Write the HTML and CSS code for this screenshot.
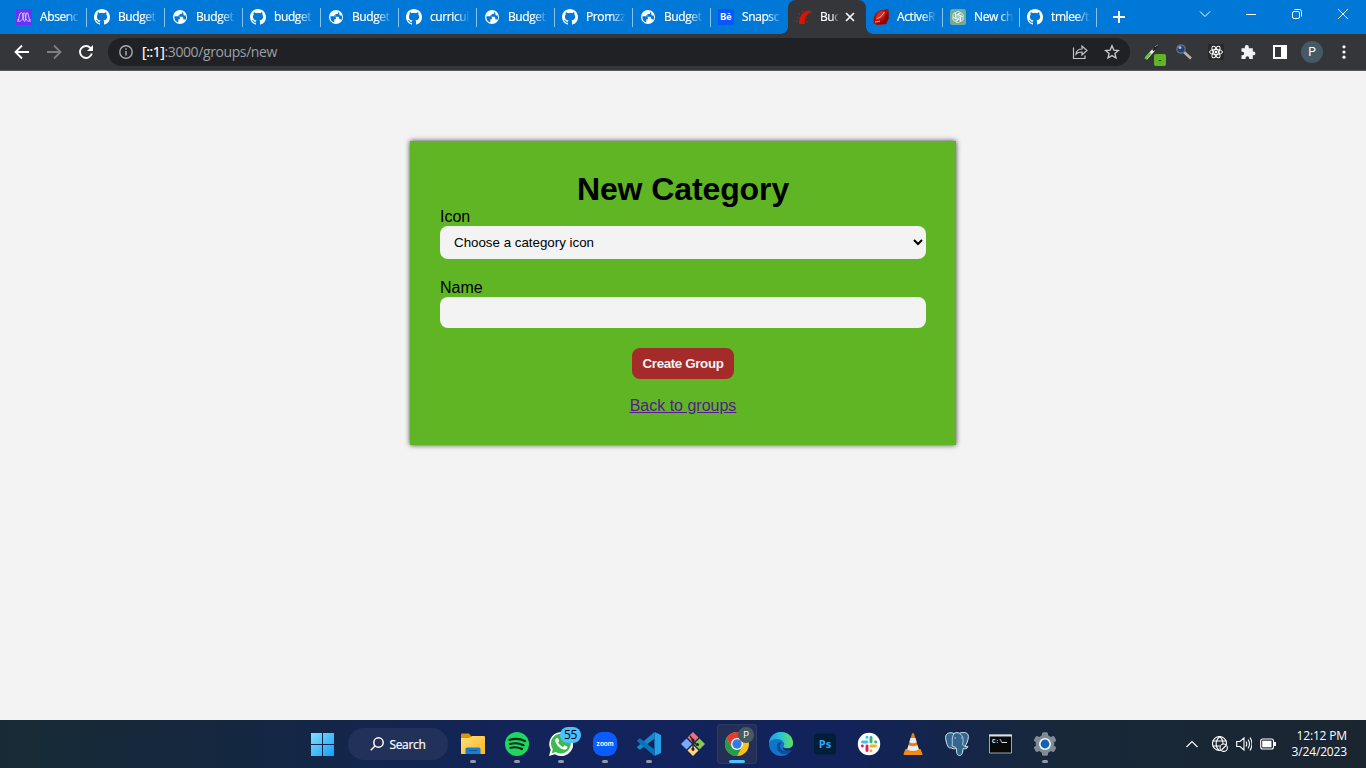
FILE: index.html
```html
<!DOCTYPE html>
<html lang="en">
<head>
<meta charset="utf-8">
<title>Budget</title>
<link rel="stylesheet" href="styles.css">
</head>
<body>
<svg class="defs" aria-hidden="true">
  <symbol id="github" viewBox="0 0 16 16"><path fill="#fff" d="M8 0C3.58 0 0 3.58 0 8c0 3.54 2.29 6.53 5.47 7.59.4.07.55-.17.55-.38 0-.19-.01-.82-.01-1.49-2.01.37-2.53-.49-2.69-.94-.09-.23-.48-.94-.82-1.13-.28-.15-.68-.52-.01-.53.63-.01 1.08.58 1.23.82.72 1.21 1.87.87 2.33.66.07-.52.28-.87.51-1.07-1.78-.2-3.64-.89-3.64-3.95 0-.87.31-1.59.82-2.15-.08-.2-.36-1.02.08-2.12 0 0 .67-.21 2.2.82a7.6 7.6 0 0 1 4 0c1.53-1.04 2.2-.82 2.2-.82.44 1.1.16 1.92.08 2.12.51.56.82 1.27.82 2.15 0 3.07-1.87 3.75-3.65 3.95.29.25.54.73.54 1.48 0 1.07-.01 1.93-.01 2.2 0 .21.15.46.55.38A8 8 0 0 0 16 8c0-4.42-3.58-8-8-8z"/></symbol>
  <symbol id="globe" viewBox="0 0 16 16"><circle cx="8" cy="8" r="7" fill="#fff"/><path fill="#0078d7" d="M2.400 7.300h3.100q2.500 0 2.500 2v1H6.300v3.300A5.900 5.900 0 0 1 2.400 7.300zM8.800 2.300h1.400v1.400q0 1.200-1.200 1.200H7.500v1.600H6v1.200h4q1.200 0 1.200 1.200v1.400h1q1 0 1.100.9a5.800 5.800 0 0 0 .5-4.700h-1.200q-1.200 0-1.200-1V4.300L9.500 2.200z"/></symbol>
</svg>
<div class="browser">
  <header class="tabs">
    <div class="tab"><svg class="fav" viewBox="0 0 16 16"><path fill="#6b32f5" d="M0 0h16v16H0z"/><path d="M1.500 13C3 12 3 3.500 5.300 3.500S7 12.500 8.500 12.500 9.500 3.500 11 3.500 13 12 14.500 13M1.500 10.500C2.500 14 7 12 7 7 7 2.500 9.300 2.500 9.300 7S13 14 14.500 10.500" fill="none" stroke="#ddceff"/></svg><span class="title">Absenc</span></div>
    <div class="tab"><svg class="fav"><use href="#github"/></svg><span class="title">Budget</span></div>
    <div class="tab"><svg class="fav"><use href="#globe"/></svg><span class="title">Budget</span></div>
    <div class="tab"><svg class="fav"><use href="#github"/></svg><span class="title">budget</span></div>
    <div class="tab"><svg class="fav"><use href="#globe"/></svg><span class="title">Budget</span></div>
    <div class="tab"><svg class="fav"><use href="#github"/></svg><span class="title">curricul</span></div>
    <div class="tab"><svg class="fav"><use href="#globe"/></svg><span class="title">Budget</span></div>
    <div class="tab"><svg class="fav"><use href="#github"/></svg><span class="title">Promzz</span></div>
    <div class="tab"><svg class="fav"><use href="#globe"/></svg><span class="title">Budget</span></div>
    <div class="tab last"><span class="fav behance">Bē</span><span class="title">Snapsc</span></div>
    <div class="tab active"><svg class="fav" viewBox="0 0 16 16"><path fill="#d81505" d="M3 15C3 9 6 3 11 1.800c2-.4 3.800.2 4.500.7l-.8 1.200C11.500 4 7.800 9 9 15zM.5 11.500l1 .4-.1 1.300-1.200-.3zM1.500 7.800l1 .7-.5 1-1-.6zM3.500 4.300l.8.900-.7.800-.8-.8zM6.700 1.600l.4 1-.8.600-.5-1zM10.500 12l1.300.4.400 1.300-1.300-.4zM10.100 9l1 .4.100 1-1-.4z"/></svg><span class="title">Buc</span><svg class="x" viewBox="0 0 10 10"><path d="m1 1 8 8M9 1 1 9" stroke="#fff" stroke-width="1.700"/></svg></div>
    <div class="tab narrow first"><svg class="fav" viewBox="0 0 16 16"><path fill="#b30d04" d="M.5 9Q2 3 9 1L15.500 0v9.500L13 15l-9 1-3.500-2z"/><path fill="#d62c20" d="M3 8Q4 3 9 2c4-.2 4 3 1 6s-7 4-7 0z"/><path fill="#840602" d="M15.500 2v7.500L13 15l-9 .5 7-4z"/><path d="M3.500 10Q9 8 11.500 3M2 13q4-.5 5-1" fill="none" stroke="#f3aa9c"/></svg><span class="title">ActiveR</span></div>
    <div class="tab narrow"><svg class="fav" viewBox="0 0 16 16"><rect width="16" height="16" rx="2.500" fill="#74aa9c"/><g fill="none" stroke="#fff" stroke-width=".7"><path id="petal" d="M5.600 9.400V4.700a2.500 2.500 0 0 1 4.500-1.300M7.300 7.600V5.300l3.500-2"/><use href="#petal" transform="rotate(60 8 8)"/><use href="#petal" transform="rotate(120 8 8)"/><use href="#petal" transform="rotate(180 8 8)"/><use href="#petal" transform="rotate(240 8 8)"/><use href="#petal" transform="rotate(300 8 8)"/></g></svg><span class="title">New ch</span></div>
    <div class="tab narrow"><svg class="fav"><use href="#github"/></svg><span class="title">tmlee/t</span></div>
    <svg class="plus" viewBox="0 0 12 12"><path d="M6 0v12M0 6h12" stroke="#fff" stroke-width="2"/></svg>
    <div class="window">
      <svg viewBox="0 0 12 12"><path d="m1 3.500 5 5 5-5"/></svg>
      <svg viewBox="0 0 12 12"><path d="M1 6.500h10"/></svg>
      <svg viewBox="0 0 12 12"><rect x="1.500" y="3.500" width="7" height="7" rx="1.500"/><path d="M3.500 1.500h5q2 0 2 2v5"/></svg>
      <svg viewBox="0 0 12 12"><path d="m1 1 10 10M11 1 1 11"/></svg>
    </div>
  </header>
  <nav class="toolbar">
    <svg class="nav-icon" viewBox="0 0 16 16"><path d="M15 8H2M8 1.500 1.500 8 8 14.500" fill="none" stroke="#fff" stroke-width="1.800"/></svg>
    <svg class="nav-icon" viewBox="0 0 16 16"><path d="M1 8h13M8 1.500 14.500 8 8 14.500" fill="none" stroke="#7e7f82" stroke-width="1.800"/></svg>
    <svg class="nav-icon" viewBox="0 0 16 16"><path d="M13.800 9.500A6 6 0 1 1 12.200 3.700L14 5.500" fill="none" stroke="#fff" stroke-width="1.900"/><path d="M15 1v6H9z" fill="#fff"/></svg>
    <div class="address">
      <svg class="info" viewBox="0 0 14 14"><circle cx="7" cy="7" r="6.200" fill="none" stroke="#aaabad" stroke-width="1.400"/><path d="M7 6v4.500M7 3.300v1.500" stroke="#aaabad" stroke-width="1.500"/></svg>
      <span class="url"><b>[::1]</b>:3000/groups/new</span>
      <svg class="share" viewBox="0 0 16 16" fill="none" stroke="#c5c6c8" stroke-width="1.200"><path d="M1.500 3.500v11h11.500v-3M4 10c.5-4 3-5 6-5V2l5 4.500L10 11V8C7.500 8 5.500 8.300 4 10z"/></svg>
      <svg class="star" viewBox="0 0 16 16"><path d="m8 1.800 1.800 4.300 4.600.4-3.500 3 1.100 4.500L8 11.600 4 14l1.100-4.500-3.500-3 4.600-.4z" fill="none" stroke="#c8cacd" stroke-width="1.300"/></svg>
    </div>
    <div class="extensions">
      <span class="ext picker"><svg viewBox="0 0 16 16"><path d="m2 14.500 8-9" stroke="#eee" stroke-width="3"/><path d="m1.500 15 5-6" stroke="#67c23a" stroke-width="2.600"/><path d="m9 6.500 5-5.500" stroke="#222628" stroke-width="2.500"/><path d="m11 2.800 3-2" stroke="#888"/></svg><i class="badge">-</i></span>
      <svg class="ext" viewBox="0 0 16 16"><path d="m8 8 7 6.500" stroke="#b9b3ad" stroke-width="2.500"/><circle cx="5" cy="5" r="4.200" fill="#263f70" stroke="#65738d" stroke-width="1.200"/><circle cx="4" cy="3.600" r="1.500" fill="#9fbde9"/></svg>
      <svg class="ext" viewBox="0 0 16 16"><path fill="#28292b" d="M0 0h16v16H0z"/><g fill="none" stroke="#fff" stroke-width="1"><ellipse cx="8" cy="8" rx="6.500" ry="2.500"/><ellipse cx="8" cy="8" rx="6.500" ry="2.500" transform="rotate(60 8 8)"/><ellipse cx="8" cy="8" rx="6.500" ry="2.500" transform="rotate(120 8 8)"/></g><circle cx="8" cy="8" r="1.300" fill="#fff"/></svg>
      <svg class="ext" viewBox="0 0 16 16"><path fill="#f1f3f4" d="M1.500 4.200h3.300V3a2 2 0 0 1 4 0v1.200h4V7.500h.7a1.900 1.900 0 0 1 0 3.800h-.7V15H9.200v-1a1.800 1.800 0 0 0-3.600 0v1H1.500v-3.700h.9a1.800 1.800 0 0 0 0-3.600h-.9z"/></svg>
      <svg class="ext" viewBox="0 0 16 16"><path fill="#fff" fill-rule="evenodd" d="M1 1h14v14H1zm2 2v10h6V3z"/></svg>
      <span class="avatar">P</span>
      <svg class="dots" viewBox="0 0 4 16"><g fill="#fff"><circle cx="2" cy="2.800" r="1.600"/><circle cx="2" cy="8" r="1.600"/><circle cx="2" cy="13.200" r="1.600"/></g></svg>
    </div>
  </nav>
</div>
<main class="page">
  <form class="card">
    <h1>New Category</h1>
    <label for="icon">Icon</label>
    <select id="icon"><option>Choose a category icon</option></select>
    <label for="name">Name</label>
    <input id="name" type="text">
    <button type="button">Create Group</button>
    <a href="#groups">Back to groups</a>
  </form>
</main>
<footer class="taskbar">
  <div class="apps">
    <div class="app"><svg viewBox="0 0 24 24"><defs><linearGradient id="win" x2="1" y2="1"><stop stop-color="#80e0fc"/><stop offset="1" stop-color="#149dff"/></linearGradient></defs><path fill="url(#win)" d="M1 1h11v11H1zm12 0h11v11H13zM1 13h11v11H1zm12 0h11v11H13z"/></svg></div>
    <div class="search"><svg viewBox="0 0 14 14"><circle cx="8.500" cy="5.500" r="4.700"/><path d="M5.200 8.800.8 13.200"/></svg>Search</div>
    <div class="app run"><svg viewBox="0 0 24 24"><defs><linearGradient id="fold" x2="1" y2="1"><stop stop-color="#ffe17a"/><stop offset="1" stop-color="#ffb51f"/></linearGradient></defs><path fill="#dc9700" d="M0 2.500q0-1 1-1h7l2 2.500v5H0z"/><path fill="url(#fold)" d="M0 6h8l3-2h12q1 0 1 1v17H0z"/><path fill="#1680d0" d="M4.500 22v-5q0-1.500 1.500-1.500h12q1.500 0 1.500 1.500v5z"/><path d="M8 18.500h8" stroke="#0c5ba4"/></svg></div>
    <div class="app run"><svg viewBox="0 0 24 24"><circle cx="12" cy="12" r="12" fill="#1ed760"/><path d="M4.500 7.900Q13 5.400 20 9.100M5 12q7.500-2 13.500 1.200M5.500 15.800q6.500-1.500 11.500 1.200" fill="none" stroke="#102a19" stroke-width="2.200" stroke-linecap="round"/></svg></div>
    <div class="app run"><svg viewBox="0 0 24 24"><path fill="#fff" d="m0 24 1.700-6.200A12 12 0 1 1 6 22.300z"/><path fill="#3dba4d" d="m2.700 21.200 1.100-3.900A9.900 9.900 0 1 1 6.700 20z"/><path fill="#fff" d="M7.200 6.300c-1 .9-1.300 2.300-.6 3.900 1.500 3.700 4.600 6.500 8.200 7.400 1.800.4 3.800-.9 3.700-2.900l-3-1.500-1.500 1.800c-2.300-.9-3.900-2.400-4.900-4.400l1.200-1.500-1.400-3z"/></svg><i class="count">55</i></div>
    <div class="app run"><svg viewBox="0 0 24 24"><rect width="24" height="24" rx="9" fill="#0b5cff"/><text x="12" y="13.800" text-anchor="middle" class="zoom-text">zoom</text></svg></div>
    <div class="app run"><svg viewBox="0 0 24 24"><path fill="#22a0e8" d="m17.500 0 6.500 3v18l-6.500 3z"/><path fill="#1688cf" d="M17.500 0v6.500L3 17.700.2 15.800v-1z"/><path fill="#0874b8" d="M17.500 24v-6.500L3 6.300.2 8.200v1z"/></svg></div>
    <div class="app"><svg viewBox="0 0 24 24"><path fill="#f37176" d="m12 0 5.500 5.500L12 11 6.500 5.500z"/><path fill="#79aaf7" d="m5.500 6.500 5.500 5.500-5.500 5.500L0 12z"/><path fill="#83cb57" d="m18.500 6.500L24 12l-5.500 5.500L13 12z"/><path fill="#ffd779" d="m12 13 5.500 5.500L12 24l-5.500-5.500z"/><path d="m9 4 3 4v11m0-10 4 4" fill="none" stroke="#26212b" stroke-width="1.300"/><g fill="#26212b"><circle cx="12" cy="8" r="1.600"/><circle cx="16.500" cy="12.500" r="1.600"/><circle cx="12" cy="17" r="1.600"/></g></svg></div>
    <div class="app run current"><svg viewBox="0 0 24 24"><circle cx="12" cy="12" r="12" fill="#fbc116"/><path fill="#e33b2e" d="M1.600 6a12 12 0 0 1 20.800 0H12v6L6.800 15z"/><path fill="#269b48" d="M1.600 6a12 12 0 0 0 10.400 18l5.200-9L12 12l-5.200 3z"/><circle cx="12" cy="12" r="6" fill="#fff"/><circle cx="12" cy="12" r="4.700" fill="#317be8"/></svg><i class="profile">P</i></div>
    <div class="app"><svg viewBox="0 0 24 24"><defs><linearGradient id="edge" x2="1"><stop stop-color="#1b9de2"/><stop offset=".5" stop-color="#2ac6d3"/><stop offset="1" stop-color="#66df56"/></linearGradient></defs><circle cx="12" cy="12" r="12" fill="#1174c7"/><path fill="url(#edge)" d="M0 11C1-3 22-4 24 10c.5 6-5 7-9 5.500-1.500-.8.500-1.500.2-4C14 6 3 5 0 11z"/><path fill="#0c4c9c" d="M9 11c-3 5 .5 11 7 11 3 0 5-2 6.500-4-4 2-10 2-11.500-3-.5-2 .5-3 1.500-4-1-1-2.500-1-3.500 0z"/><path fill="#14234f" d="M24 14c-2 3-8 3.500-10 1-1 3 4 5 8.500 3l1.500-1z"/></svg></div>
    <div class="app"><svg viewBox="0 0 24 24"><rect x="1" y="1.500" width="22" height="21" rx="3.500" fill="#001e36"/><text x="12" y="15.500" text-anchor="middle" class="ps-text">Ps</text></svg></div>
    <div class="app"><svg viewBox="0 0 24 24"><circle cx="12" cy="12" r="11.200" fill="#fff"/><g fill="none" stroke-width="2.900" stroke-linecap="round"><path stroke="#36c5f0" d="M10 5.300v.1M5.500 10H10"/><path stroke="#2eb67d" d="M14 5.500V10m4.700 0h.1"/><path stroke="#ecb22e" d="M14 14h4.500M14 18.700v.1"/><path stroke="#e01e5a" d="M10 14v4.500M5.300 14h.1"/></g></svg></div>
    <div class="app"><svg viewBox="0 0 24 24"><path fill="#f58a12" d="m4.500 17-2 5q-.4 1 1 1h17q1.400 0 1-1l-2-5z"/><path fill="#f47b0b" d="M11 1.500q1-1 2 0L18 18q-6 4-12 0z"/><path fill="#e7edf2" d="M9.600 6h4.800l1.300 4.300Q12 12 8.300 10.300zM7.500 13.200q4.500 2 9 0l1.300 4.300q-5.800 3-11.600 0z"/></svg></div>
    <div class="app"><svg viewBox="0 0 24 24"><path fill="#336791" stroke="#dce8ef" stroke-width="1" d="M6 15.500C3 18 .8 9.500.6 5.500.4 1 5.500-.2 9 1.500c2-1.300 4-1 5.500-.2C19-.8 23.500.8 23.400 4.500c-.2 4-1.800 7.500-3.400 10l3 .2c-1 2-3 2.400-5 2-.3 3-.5 6.800-3.500 6.800s-3-3.500-3-7C9 17 7 17 6 15.500z"/><path d="M9 1.500C6 6 8 11 7 14l4 1.500M14.500 1.300c4 2.700 4.200 7 3 11.200l2.500 2M16 6h1M9.500 6h1.500" fill="none" stroke="#dce8ef" stroke-width=".8"/></svg></div>
    <div class="app"><svg viewBox="0 0 24 24"><path fill="#080909" stroke="#9da4aa" d="M.5 3h22v18H.5z"/><path fill="#dbe0e5" d="M0 2.500h23v2H0z"/><text x="3" y="11" class="cmd-text">C:\</text><path d="M13 10.500h5" stroke="#ddd"/></svg></div>
    <div class="app run"><svg viewBox="0 0 24 24"><g fill="#828b93"><circle cx="12" cy="12" r="9.300"/><g id="tooth"><rect x="9" y=".3" width="6" height="23.400" rx="1.500"/></g><use href="#tooth" transform="rotate(60 12 12)"/><use href="#tooth" transform="rotate(120 12 12)"/></g><circle cx="12" cy="12" r="6" fill="#f2f6fa"/><circle cx="12" cy="12" r="4.400" fill="#1261b5"/></svg></div>
  </div>
  <div class="tray">
    <svg class="chevron" viewBox="0 0 12 12"><path d="m.5 9 5.500-5.500L11.500 9"/></svg>
    <svg viewBox="0 0 16 16"><circle cx="7.500" cy="7.500" r="7"/><path d="M.5 5h14M.5 10H8M8 .5c-5 4-5 10-1 14M7.500.5C11 3 11 6 11 8"/><circle cx="11.700" cy="11.700" r="3.700" fill="#1a2531"/><path d="m9.500 14 4.500-4.500"/></svg>
    <svg viewBox="0 0 16 16"><path d="M.7 5.500v5H4l4 3.500V2L4 5.500zM10 5.500q1.500 2.500 0 5M12 3.500q3 4.500 0 9M14 1.500q4 6.500 0 13"/></svg>
    <svg class="battery" viewBox="0 0 16 12"><rect x=".7" y="1" width="12.800" height="10" rx="2"/><path d="M15 4v4" stroke-width="2"/><path fill="#fff" stroke="none" d="M2.200 2.700h9.300v6.600H2.200z"/></svg>
    <div class="clock">12:12 PM<br>3/24/2023</div>
  </div>
</footer>
</body>
</html>
```
FILE: styles.css
```css
* { box-sizing: border-box; }
body { margin: 0; height: 768px; display: flex; flex-direction: column; overflow: hidden; background: #f3f3f3; font-family: "Liberation Sans", Arial, sans-serif; }
svg { display: block; flex: none; }
.defs { position: absolute; width: 0; height: 0; }
i { font-style: normal; }
.browser { flex: none; height: 71px; font-family: "Open Sans", "Noto Sans", sans-serif; color: #fff; }
.tabs { height: 34px; display: flex; background: #0078d7; padding-left: 9px; }
.tab { width: 78px; height: 34px; display: flex; align-items: center; padding-left: 7px; gap: 8px; background: linear-gradient(#8ac1ed, #8ac1ed) right 8px / 1px 19px no-repeat; }
.tab.last { background: none; width: 77px; }
.tab.narrow { width: 77px; }
.fav { width: 16px; height: 16px; flex: none; }
.title { width: 40px; flex: none; white-space: nowrap; font-size: 12px; line-height: 18px; letter-spacing: -.4px; -webkit-text-stroke: .2px #fff; mask-image: linear-gradient(90deg, #000 62%, transparent); }
.behance { background: #0757ff; font: bold 9px/16px Inter, sans-serif; text-align: center; }
.tab.active { position: relative; width: 78px; background: #35363a; border-radius: 8px 8px 0 0; padding-left: 8px; gap: 7px; }
.tab.active::before, .tab.active::after { content: ""; position: absolute; bottom: 0; width: 7px; height: 7px; }
.tab.active::before { left: -7px; background: radial-gradient(circle at 0 0, transparent 6.500px, #35363a 7px); }
.tab.active::after { right: -7px; background: radial-gradient(circle at 100% 0, transparent 6.500px, #35363a 7px); }
.active .title { width: 19px; margin-left: 1px; }
.x { width: 10px; height: 10px; margin-left: -1px; }
.plus { width: 12px; height: 12px; margin: 11px 0 0 16px; }
.window { display: flex; margin-left: auto; padding: 8px 17px 0 0; gap: 34px; }
.window svg { width: 12px; height: 12px; fill: none; stroke: #fff; }
.toolbar { height: 37px; background: #35363a; border-bottom: 1px solid #59565c; display: flex; align-items: center; padding-left: 14px; gap: 16px; }
.nav-icon { width: 16px; height: 16px; }
.address { width: 1022px; height: 28px; margin-left: -2px; border-radius: 14px; background: #202124; display: flex; align-items: center; padding: 0 10px 0 11px; }
.info { width: 14px; height: 14px; margin-right: 9px; }
.url { font-size: 14px; line-height: 20px; color: #9aa0a6; letter-spacing: -.4px; }
.url b { font-weight: 400; color: #fff; -webkit-text-stroke: .2px #fff; }
.share { width: 16px; height: 16px; margin-left: auto; }
.star { width: 16px; height: 16px; margin-left: 16px; }
.extensions { display: flex; align-items: center; gap: 16px; margin-left: -2px; }
.ext { position: relative; width: 16px; height: 16px; }
.badge { position: absolute; left: 10px; top: 10px; width: 12px; height: 12px; border-radius: 2px; background: #60b524; color: #000; font-size: 9px; line-height: 11px; text-align: center; }
.avatar { width: 22px; height: 22px; border-radius: 50%; background: #455a64; font: 12px/22px Roboto, sans-serif; text-align: center; margin: 0 -3px; }
.dots { width: 4px; height: 16px; margin-left: 6px; }

.page { flex: 1; padding-top: 70px; }
.card { width: 546px; height: 304px; margin: 0 auto; padding: 30px; display: flex; flex-direction: column; background: #60b524; box-shadow: 0 0 5px rgba(0, 0, 0, .75); font-size: 16px; line-height: 18px; color: #000; }
.card h1 { margin: 0; font-size: 32px; line-height: 37px; text-align: center; letter-spacing: -.1px; }
.card select, .card input { height: 33px; flex: none; margin: 0 0 20px; border: 0; border-radius: 8px; background: #f3f3f3; padding: 0 10px; font: 13.333px "Liberation Sans", Arial, sans-serif; color: #000; }
.card input { height: 31px; }
.card button { width: 102px; height: 31px; flex: none; align-self: center; border: 0; border-radius: 8px; padding: 0; background: #a52a2a; color: #f3f3f3; font: bold 13.333px "Liberation Sans", Arial, sans-serif; letter-spacing: -.35px; margin-bottom: 18px; }
.card a { align-self: center; color: #551a8b; }

.taskbar { flex: none; height: 48px; padding-left: 300px; display: flex; justify-content: space-between; background: linear-gradient(90deg, #182b35 0, #142741 18%, #12245a 38%, #11235a 62%, #182839 78%, #1a2530 100%); color: #fff; font-family: "Open Sans", "Noto Sans", sans-serif; }
.apps { display: flex; align-items: center; }
.app { position: relative; width: 44px; height: 40px; display: flex; align-items: center; justify-content: center; }
.app > svg { width: 24px; height: 24px; }
.app.run::after { content: ""; position: absolute; bottom: 1px; left: 19px; width: 6px; height: 3px; border-radius: 2px; background: #9499a8; }
.app.current { width: 40px; margin: 0 2px; border-radius: 4px; background: #242f58; box-shadow: inset 0 0 0 1px #303a60; }
.app.current::after { left: 12px; width: 16px; background: #4cc2ff; }
.search { width: 100px; height: 32px; margin: 0 3px 0 4px; border-radius: 16px; background: #223159; display: flex; align-items: center; justify-content: center; gap: 5px; font-size: 12px; letter-spacing: -.3px; -webkit-text-stroke: .2px #fff; }
.search svg { width: 14px; height: 14px; fill: none; stroke: #fff; stroke-width: 1.500; }
.count { position: absolute; left: 21px; top: 3px; width: 21px; height: 16px; border-radius: 8px; background: #4cc2ff; color: #000; font-size: 12px; line-height: 16px; text-align: center; letter-spacing: -.4px; }
.profile { position: absolute; left: 21px; top: 3px; width: 16px; height: 16px; border-radius: 50%; background: #455a64; font: 9px/16px Roboto, sans-serif; text-align: center; }
.zoom-text { font: 600 6.500px Inter, sans-serif; fill: #fff; }
.ps-text { font: bold 11px "Open Sans", sans-serif; fill: #31a8ff; }
.cmd-text { font: bold 6px "Liberation Mono", monospace; fill: #fff; }
.tray { display: flex; align-items: center; padding-right: 19px; }
.tray svg { width: 16px; height: 16px; margin-right: 8px; fill: none; stroke: #fff; stroke-width: 1.100; }
.tray .chevron { width: 12px; height: 12px; margin-right: 14px; }
.tray .battery { height: 12px; margin-right: 0; }
.clock { width: 71px; text-align: right; font-size: 12px; line-height: 16px; letter-spacing: -.15px; }
```
